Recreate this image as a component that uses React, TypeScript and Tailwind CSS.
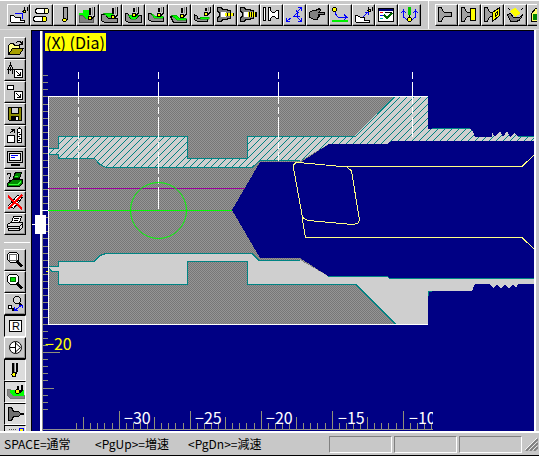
import type { ReactNode } from "react";

interface ToolItem {
  label: string;
  icon: ReactNode;
  pressed?: boolean;
}

const Icon = ({ children }: { children: ReactNode }) => (
  <svg
    width="21"
    height="20"
    viewBox="1 1 21 20"
    fill="none"
    stroke="#000"
    shapeRendering="crispEdges"
    className="block shrink-0"
    aria-hidden="true"
  >
    {children}
  </svg>
);

const ToolButton = ({ item, narrow }: { item: ToolItem; narrow?: boolean }) => (
  <button
    type="button"
    aria-label={item.label}
    aria-pressed={item.pressed}
    className={`flex h-[22px] shrink-0 overflow-hidden border ${
      narrow ? "w-[22px]" : "w-[23px]"
    } ${
      item.pressed
        ? "border-t-black border-l-black border-r-white border-b-white bg-[#dcdcdc]"
        : "border-t-white border-l-white border-r-black border-b-black bg-[#c8c8c8] shadow-[inset_-1px_-1px_0_#909090]"
    }`}
  >
    <Icon>{item.icon}</Icon>
  </button>
);

// turning tool pointing down, tip at (x, y)
const Tool = ({ x, y }: { x: number; y: number }) => (
  <g>
    <path
      d={`M${x} ${y - 3}V3.5M${x + 4.5} 3V${y - 2}L${x + 2} ${y}`}
      strokeWidth="1.5"
    />
    <path d={`M${x + 2.5} 3V${y - 3}`} stroke="#888" />
    <circle cx={x} cy={y} r="2" fill="#ff0" />
  </g>
);

const Funnel = ({ fill }: { fill: string }) => (
  <path
    d="M3.5 3.5H6.5L7.5 6.5L9.5 8.5H16.5V12.5H9.5L7.5 14.5L6.5 17.5H3.5Z"
    fill={fill}
  />
);

const Chuck = () => (
  <path
    d="M3.5 3.5H7.5L8.5 5.5H13.5V6.5H16.5V14.5H13.5V15.5H8.5L7.5 17.5H3.5V13.5L5.5 12.5V8.5L3.5 7.5Z"
    fill="#808080"
  />
);

const Cut = ({ stock, cut }: { stock: string; cut: string }) => (
  <g>
    <path d={stock} fill="#909090" />
    <path d={cut} fill="#0f0" stroke="#008000" strokeWidth="0.5" />
  </g>
);

const mainTools: ToolItem[] = [
  {
    label: "Profile",
    icon: (
      <>
        <path d="M3.5 18V11.5H6.5L8.5 13.5H13.5V16.5H17.5V18.5Z" fill="#fff" />
        <path d="M8 9.5H15.5V15" stroke="#00f" />
        <path d="M17.5 3V6M20.5 3V7" />
        <circle cx="17.5" cy="7.5" r="1.5" fill="#ff0" />
      </>
    ),
  },
  {
    label: "Stock",
    icon: (
      <>
        <path d="M7.5 4.5H17.5L18.5 5.5V8.5L17.5 9.5H7.5L5.5 8.5V5.5Z" fill="#fff" />
        <ellipse cx="16.5" cy="7" rx="2" ry="2.5" fill="#ffff9c" />
        <path d="M5.5 12.5H15.5L16.5 13.5V16.5L15.5 17.5H5.5L3.5 16.5V13.5Z" fill="#fff" />
        <ellipse cx="14.5" cy="15" rx="2" ry="2.5" fill="#ff0" />
      </>
    ),
  },
  {
    label: "Tool",
    icon: (
      <>
        <path d="M10.5 14V3.5H14.5V15L12.5 17.5" fill="#a0a0a0" />
        <circle cx="11.5" cy="16" r="1.8" fill="#ff0" />
      </>
    ),
  },
  {
    label: "Rough cut",
    icon: (
      <>
        <path d="M3.5 18V11.5H6.5L9.5 14.5H17.5V18Z" fill="#808080" stroke="#555" />
        <path d="M7 6H13V15H10L7 11H3V9H7Z" fill="#0f0" stroke="none" />
        <Tool x={14} y={14} />
      </>
    ),
  },
  {
    label: "Outer cut",
    icon: (
      <>
        <Cut stock="M2.5 10.5H6.5L9.5 14.5H18.5V18.5H5.5L2.5 16.5Z" cut="M4 9H14V13H9Z" />
        <Tool x={14} y={13} />
      </>
    ),
  },
  {
    label: "Groove",
    icon: (
      <>
        <Cut stock="M3.5 9.5H5.5L8.5 14.5H14.5L17.5 11.5H19.5V18.5H6.5L3.5 16.5Z" cut="M6 11H17L14 15H9Z" />
        <Tool x={12} y={11} />
      </>
    ),
  },
  {
    label: "Finish",
    icon: (
      <>
        <Cut stock="M3.5 9.5H5.5L9.5 13.5H18.5V17.5H6.5L3.5 15.5Z" cut="M6 9L10 12H18V14H9Z" />
        <Tool x={14} y={11} />
      </>
    ),
  },
  {
    label: "Thread",
    icon: (
      <>
        <Cut stock="M2.5 12.5H6.5L9.5 15.5H18.5V18.5H5.5Z" cut="M3 11H8L11 14H18V16H9Z" />
        <Tool x={14} y={12} />
      </>
    ),
  },
  {
    label: "Part off",
    icon: (
      <>
        <Cut stock="M3.5 10.5L6.5 12.5V14.5H16.5V17.5H6.5L3.5 15.5Z" cut="M9 13H18V15H9Z" />
        <Tool x={15} y={10} />
      </>
    ),
  },
  {
    label: "Drill",
    icon: (
      <>
        <Chuck />
        <path d="M7 8H12V13H7Z" fill="#fff" stroke="none" />
        <path d="M11 10.5H20" stroke="#000" strokeWidth="3" />
        <path d="M11 10.5H20" stroke="#ff0" strokeWidth="3" strokeDasharray="2 1" />
      </>
    ),
  },
  {
    label: "Tap",
    icon: (
      <>
        <Chuck />
        <path d="M7 8H12V13H7Z" fill="#fff" stroke="none" />
        <path d="M11 10.5H20" stroke="#000" strokeWidth="5" />
        <path d="M11 10.5H19" stroke="#ff0" strokeWidth="5" strokeDasharray="1 1" />
      </>
    ),
  },
  {
    label: "Bar feed",
    icon: (
      <>
        <path d="M3.5 3.5H5.5V16.5H3.5Z" fill="#fff" />
        <path d="M8.5 3.5H10.5V6.5L12.5 8.5H14.5L16.5 6.5H18.5V14.5H16.5L14.5 12.5H12.5L10.5 14.5V16.5H8.5Z" fill="#fff" />
      </>
    ),
  },
  {
    label: "Transfer",
    icon: (
      <>
        <path d="M4 17L8 14M11 12L14 9V13L18 17M10 12.5H17M14 8L18 4" stroke="#00f" />
        <path d="M3.5 14V17.5H7M15 3.5H18.5V7M18.5 14V17.5H15M13 6L14.5 8L16 9" stroke="#00f" />
      </>
    ),
  },
  {
    label: "Manual",
    icon: (
      <path
        d="M3.5 8.5L6.5 6.5H9.5L13.5 4.5L14.5 6.5L12.5 8.5H18.5V10.5H12.5L13.5 12.5L11.5 13.5V15.5H7.5L4.5 13.5H3.5Z"
        fill="#808080"
      />
    ),
  },
  {
    label: "Approach",
    icon: (
      <>
        <path d="M6.5 7V10L9.5 13.5H17M15 10.5L18 13.5L15 15.5" stroke="#00f" />
        <path d="M3 17H19" stroke="#0e0" strokeWidth="2" />
        <circle cx="5.5" cy="5.5" r="2" fill="#ff0" />
      </>
    ),
  },
  {
    label: "Rapid",
    icon: (
      <>
        <path d="M3.5 18V11.5H5.5L8.5 13.5H12.5V16.5H17.5V18.5Z" fill="#fff" />
        <path d="M11 13L16 8M13 8H16V11" stroke="#00f" />
        <path d="M16.5 3V5M20.5 3V7" />
        <circle cx="17.5" cy="6.5" r="1.5" fill="#ff0" />
      </>
    ),
  },
  {
    label: "Settings",
    icon: (
      <>
        <path d="M3.5 4.5H18.5V17.5H3.5Z" fill="#fff" />
        <path d="M4 5.5H18" stroke="#000080" strokeWidth="2" />
        <path d="M5 8.5H8" stroke="#f00" />
        <path d="M5 11.5H8" stroke="#00f" />
        <path d="M5 14.5H8" stroke="#0aa" />
        <path d="M9 11L12 14L17 9" stroke="#060" strokeWidth="2" />
        <path d="M10 8.5H17" />
      </>
    ),
  },
  {
    label: "Offset",
    icon: (
      <>
        <path d="M11.5 3V11" stroke="#0c0" strokeWidth="3" />
        <path d="M11.5 11V15" />
        <path d="M9 15.5L5.5 13V7M3.5 9L5.5 6L7.5 9M14 15.5L17.5 13V7M15.5 9L17.5 6L19.5 9" stroke="#00f" />
        <circle cx="11.5" cy="15.5" r="2" fill="#ff0" />
      </>
    ),
  },
];

const chuckTools: ToolItem[] = [
  { label: "Chuck", icon: <Funnel fill="#a0a0a0" /> },
  {
    label: "Clamp",
    icon: (
      <>
        <Funnel fill="#a0a0a0" />
        <path d="M12.5 4.5H17.5V16.5H12.5Z" fill="#ff0" />
      </>
    ),
  },
  {
    label: "Face",
    icon: (
      <>
        <Funnel fill="#a0a0a0" />
        <path d="M11.5 8.5L18.5 3.5V11.5L11.5 17.5Z" fill="#ff0" />
        <path d="M14.5 9.5L16 8V11L14.5 12Z" />
      </>
    ),
  },
  {
    label: "Turn",
    icon: (
      <>
        <path d="M3.5 10.5L6.5 9.5L9.5 13.5H15.5L18.5 10.5L16.5 15.5L12.5 17.5H6.5Z" fill="#808080" />
        <path d="M6 7L11 4L17 9L11 13Z" fill="#ff0" stroke="none" />
        <path d="M4 4L7 7M17 6L19 4" strokeDasharray="1 1" />
      </>
    ),
  },
  {
    label: "Area",
    icon: (
      <>
        <path d="M4.5 17.5V9.5L8.5 4.5H18V17.5Z" fill="#ff6" />
        <path d="M6 10H18V16H6Z" fill="#080" stroke="none" />
      </>
    ),
  },
];

const CornerArrow = () => (
  <>
    <path d="M10.5 10.5H18.5V18.5H10.5Z" fill="#fff" />
    <path d="M12 12L16 16M16.5 12.5V16.5H12.5" />
  </>
);

const fileTools: ToolItem[] = [
  {
    label: "Open",
    icon: (
      <>
        <path d="M4.5 17.5V8.5L6.5 6.5H9.5L10.5 8.5H15.5V11.5" fill="#ffff8c" />
        <path d="M4.5 17.5L8.5 11.5H19.5L15.5 17.5Z" fill="#a8a000" />
        <path d="M12 5.5L14 4.5H16L18 6.5M18.5 4V7.5H15" />
      </>
    ),
  },
  {
    label: "Load tool",
    icon: (
      <>
        <path d="M6.5 3V6L4.5 8.5V15M6.5 6L8.5 8.5V15M3 10.5H10M6.5 8V12" />
        <CornerArrow />
      </>
    ),
  },
  {
    label: "Load shape",
    icon: (
      <>
        <path d="M3.5 4.5H9.5V8.5H3.5Z" fill="#fff" />
        <CornerArrow />
      </>
    ),
  },
  {
    label: "Save",
    icon: (
      <>
        <path d="M4.5 4.5H17.5V17.5H5.5L4.5 16.5Z" fill="#8c8c00" />
        <path d="M7.5 4.5H14.5V10.5H7.5Z" fill="#d0d0d0" />
        <path d="M7.5 13.5H14.5V17.5H7.5Z" fill="#000" />
        <path d="M12.5 14V17" stroke="#fff" strokeWidth="2" />
      </>
    ),
  },
  {
    label: "Export",
    icon: (
      <>
        <path d="M3.5 10.5H10.5V17.5H3.5Z" fill="#fff" />
        <path d="M6 8L10 5M6.5 4.5H10.5V8" />
        <path d="M13.5 4.5L15.5 3L17.5 4.5V17.5H13.5Z" fill="#fff" />
        <path d="M14 7.5H16M15 9.5H17M14 11.5H16M15 13.5H17M14 15.5H16" />
      </>
    ),
  },
  {
    label: "Display",
    icon: (
      <>
        <path d="M3.5 4.5H18.5V15.5H3.5Z" fill="#d0d0d0" />
        <path d="M5.5 6.5H16.5V13.5H5.5Z" fill="#fff" />
        <path d="M7 8.5H14M7 10.5H11" stroke="#00f" />
        <path d="M7 17.5H16" strokeWidth="2" />
      </>
    ),
  },
  {
    label: "Machine help",
    icon: (
      <>
        <path d="M3.5 6V4.5H6.5V7.5L5.5 8.5V10M5.5 11V13" />
        <path d="M10.5 4.5L12.5 3.5H17.5L15.5 9.5H9.5Z" fill="#008000" />
        <path d="M11.5 6.5H15L14 8H11Z" fill="#3f3" stroke="none" />
        <path d="M3.5 14.5L8.5 10.5H18.5V14.5L15.5 17.5H3.5Z" fill="#080" />
        <path d="M5 15.5H14L17 12.5" stroke="#3f3" />
      </>
    ),
  },
  {
    label: "Clear tool",
    icon: (
      <>
        <path d="M4.5 14.5L13.5 4.5L18.5 6.5L9.5 17.5Z" fill="#fff" />
        <path d="M8 12L16 7M7 15L15 9" />
        <path d="M4 5L18 18M18 4L4 18" stroke="#f00" strokeWidth="2" />
      </>
    ),
  },
  {
    label: "Print",
    icon: (
      <>
        <path d="M7.5 9.5L9.5 3.5H17.5L15.5 9.5Z" fill="#fff" />
        <path d="M10 5.5H15M9.5 7.5H14" />
        <path d="M3.5 11.5L6.5 9.5H18.5V14.5L15.5 17.5H4.5Z" fill="#e0e0e0" />
        <path d="M4 13.5H15.5L18 11M5 15.5H15M15.5 13V17" />
      </>
    ),
  },
];

const viewTools: ToolItem[] = [
  {
    label: "Zoom",
    icon: (
      <>
        <path d="M5.5 3.5H12.5L14.5 5.5V10.5L12.5 13.5H6.5L3.5 10.5V5.5Z" fill="#fff" />
        <path d="M5.5 5.5H12.5V11.5H5.5Z" fill="#fff" stroke="#666" />
        <path d="M13 12L18 17.5" strokeWidth="3" />
      </>
    ),
  },
  {
    label: "Zoom area",
    icon: (
      <>
        <path d="M5.5 3.5H12.5L14.5 5.5V10.5L12.5 13.5H6.5L3.5 10.5V5.5Z" fill="#fff" />
        <path d="M6.5 6.5H11.5V10.5H6.5Z" fill="#0d0" stroke="#060" />
        <path d="M13 12L18 17.5" strokeWidth="3" />
      </>
    ),
  },
  {
    label: "Zoom scale",
    icon: (
      <>
        <circle cx="13" cy="7" r="3.5" fill="#d8d8d8" />
        <path d="M15 10L17.5 13" strokeWidth="2" />
        <circle cx="6" cy="14" r="2" fill="#fff" />
        <path d="M8 15L10 18" strokeWidth="2" />
        <path d="M10.5 17.5L18 12M10.5 14V17.5H14M15 12.5H18.5V15" stroke="#00f" />
      </>
    ),
  },
  {
    label: "Reset",
    pressed: true,
    icon: (
      <>
        <path d="M5.5 5.5H17.5V16.5H5.5Z" fill="#fff" />
        <text x="8" y="15" fontSize="11" fontFamily="Liberation Sans, sans-serif" fill="#000" stroke="none">
          R
        </text>
      </>
    ),
  },
  {
    label: "Forward",
    icon: (
      <g shapeRendering="auto">
        <circle cx="11.5" cy="10.5" r="6" fill="#fff" />
        <path d="M6 10.5H12M11.5 5V16M12 6.5L16.5 10.5L12 14.5" />
      </g>
    ),
  },
  {
    label: "Show tool",
    pressed: true,
    icon: (
      <>
        <path d="M8.5 4V14M12.5 4V13L10.5 16" strokeWidth="2" />
        <path d="M10.5 4V14" stroke="#888" />
        <circle cx="10" cy="15.5" r="2" fill="#ff0" />
      </>
    ),
  },
  {
    label: "Show stock",
    pressed: true,
    icon: (
      <>
        <path d="M3.5 8.5H6.5L8.5 14.5H20V17.5H6.5L3.5 14.5Z" fill="#888" stroke="#777" />
        <path d="M6 9H20V15H9L6 12Z" fill="#0f0" stroke="none" />
        <path d="M14 5V9M18 4V9L15 12" strokeWidth="2" />
        <circle cx="13.5" cy="10.5" r="2" fill="#ff0" />
      </>
    ),
  },
  {
    label: "Show chuck",
    pressed: true,
    icon: (
      <path
        d="M4.5 4.5H7.5L9.5 8.5H14.5L16.5 10.5H19.5V11.5H16.5L14.5 13.5H9.5L7.5 17.5H4.5Z"
        fill="#707070"
      />
    ),
  },
  {
    label: "Show path",
    pressed: true,
    icon: (
      <>
        <path d="M5 4.5H12" stroke="#555" strokeDasharray="1 1" />
        <path d="M15.5 3.5H19.5V6.5H15.5Z" fill="#ff0" stroke="#00f" />
      </>
    ),
  },
];

const UNIT = 7.1;
const yTicks = Array.from({ length: 48 }, (_, i) => i - 19);
const xTicks = Array.from({ length: 51 }, (_, i) => i);
const xLabels = [
  { value: "−30", x: 124 },
  { value: "−25", x: 195 },
  { value: "−20", x: 266 },
  { value: "−15", x: 338 },
  { value: "−10", x: 409 },
];

const upperProfile =
  "M49 148H58V136H187V158H247V136H355L394 96H428V129H470L473 131L475 137H492V132L495 137L500 131L503 137L507 131L510 137L515 133L518 137H534V141H392L387 144H329L300 161H260L252 167H106L100 165L94 158H58V154H49Z";
const lowerProfile =
  "M49 266H58V261H94L100 255L106 253H252L259 260H300L328 276H387L390 278H534V284H518L516 288L513 285L509 288L505 285L501 288L497 285L493 288L490 284H475L472 291H428V325H395L356 284H247V261H187V284H58V271H52L49 268Z";

const MachiningPlot = () => (
  <svg
    viewBox="32 31 502 400"
    className="block h-full w-full"
    shapeRendering="crispEdges"
    fontFamily='"Noto Sans CJK JP", sans-serif'
    role="img"
    aria-label="Lathe machining view"
  >
    <defs>
      <pattern id="hatch" width="7" height="7" patternUnits="userSpaceOnUse">
        <path d="M-1 8L8 -1M-1 1L1 -1M6 8L8 6" stroke="#008080" />
      </pattern>
      <pattern id="stock" width="2" height="2" patternUnits="userSpaceOnUse">
        <path d="M0 0H2V2H0Z" fill="#959595" />
        <path d="M0 0H1V1H0ZM1 1H2V2H1Z" fill="#777" />
      </pattern>
      <clipPath id="ruler">
        <rect x="43" y="400" width="390" height="31" />
      </clipPath>
    </defs>

    {/* stock */}
    <rect x="48" y="96" width="370" height="229" fill="url(#stock)" />
    <path d="M232 210L260 162H301L329 144H387L392 141H428V278H390L387 276H328L300 258H260Z" fill="#000084" />

    {/* finished part */}
    <path d={upperProfile} fill="#cfcfcf" />
    <path d={upperProfile} fill="url(#hatch)" />
    <path d={lowerProfile} fill="#cfcfcf" />
    <g fill="none" stroke="#008484">
      <path d="M49 148.5H58.5V136.5H187.5V158.5H247.5V136.5H355.5L395 96.5" />
      <path d="M49 154.5H58.5V158.5H94.5L100 164.5L106 167.5H252L260 160.5H300" />
      <path d="M432 128.5H470M518 136.5H534" />
      <path d="M49 266.5H58.5V261.5H94L100 255.5L106 253.5H252L259 260.5H300M328 276.5H387L390 278.5H534" />
      <path d="M49 268L52 271.5H58.5V284.5H187.5V261.5H247.5V284.5H356L395.5 324M428.5 296V291.5H432" />
    </g>
    <path d="M428 96.5H48.5V324.5H428" fill="none" stroke="#fff" />

    {/* centre line and reference marks */}
    <path d="M48 188.5H245" stroke="#990099" />
    <path d="M48 210.5H232" stroke="#0f0" />
    <g stroke="#fff" strokeDasharray="7 3 22 3">
      <path d="M78.5 72V210" />
      <path d="M158.5 72V210" />
      <path d="M278.5 72V161" />
      <path d="M412.5 72V137" />
    </g>
    <circle cx="158.5" cy="210.5" r="28" fill="none" stroke="#0f0" shapeRendering="auto" />

    {/* boring bar with insert */}
    <g fill="none" stroke="#ffff84">
      <path d="M298.5 162.5L347 167L351.5 171L359.5 220L358 223L353 224.5L308 220.5L302.5 217.5L293.5 168V165L296 162.5Z" />
      <path d="M347 166.5H522L534 155M302 217L305.5 237.5H522L534 249" />
    </g>

    {/* vertical ruler */}
    <path d="M42.5 31V431" stroke="#909090" />
    <path d="M41 31V431" stroke="#fff" strokeWidth="2" />
    {yTicks.map((k) => {
      const y = Math.round(210 + k * UNIT) + 0.5;
      const end = k === 20 ? 60 : k === 25 ? 54 : 48;
      return <path key={k} d={`M43 ${y}H${end}`} stroke="#909078" />;
    })}
    <path d="M46 271.5H48" stroke="#ff0" />
    <path d="M32 224.5H36M40 210.5H48" stroke="#fff" />
    <rect x="35" y="215" width="11" height="19" fill="#fff" />
    <text x="45" y="350" fontSize="16" fontWeight="400" fill="#ff0">
      −20
    </text>

    {/* horizontal ruler */}
    <path d="M43 429.5H433" stroke="#909090" />
    {xTicks.map((k) => {
      const x = Math.round(76 + k * UNIT) + 0.5;
      const top = k % 10 === 6 ? 411 : k % 10 === 1 ? 417 : 423;
      return <path key={k} d={`M${x} ${top}V430`} stroke="#909078" />;
    })}
    <g clipPath="url(#ruler)" fontSize="16" fontWeight="400" fill="#fff">
      {xLabels.map((label) => (
        <text key={label.value} x={label.x} y="424">
          {label.value}
        </text>
      ))}
    </g>
  </svg>
);

const StatusBar = () => (
  <footer className="flex h-[23px] shrink-0 items-center border-b border-black pr-px text-xs text-black">
    <span className="w-[91px] pl-1 whitespace-nowrap">SPACE=通常</span>
    <span className="w-[93px] pl-1 whitespace-nowrap">&lt;PgUp&gt;=増速</span>
    <span className="flex-1 pl-1 whitespace-nowrap">&lt;PgDn&gt;=減速</span>
    <div className="flex gap-0.5">
      {[0, 1, 2].map((i) => (
        <div
          key={i}
          className="h-[17px] w-[63px] border border-t-[#808080] border-r-white border-b-white border-l-[#808080]"
        />
      ))}
    </div>
    <svg width="14" height="14" viewBox="0 0 14 14" className="ml-0.5 shrink-0" aria-hidden="true">
      <path d="M1 13L13 1M5 13L13 5M9 13L13 9" stroke="#fff" />
      <path d="M2 14L14 2M6 14L14 6M10 14L14 10" stroke="#808080" strokeWidth="2" />
    </svg>
  </footer>
);

const App = () => {
  return (
    <div className="flex h-screen flex-col overflow-hidden bg-[#c8c8c8] font-['Noto_Sans_CJK_JP',sans-serif]">
      <header className="flex h-[30px] shrink-0 overflow-hidden border-t border-b border-t-white border-b-[#dedede] pr-0.5">
        <div className="flex shrink-0 pt-[3px] pl-[7px]">
          {mainTools.map((item) => (
            <ToolButton key={item.label} item={item} />
          ))}
        </div>
        <div className="ml-[7px] flex min-w-0 flex-1 overflow-hidden border-l border-white pt-[3px] pl-1.5">
          {chuckTools.map((item) => (
            <ToolButton key={item.label} item={item} />
          ))}
        </div>
      </header>

      <main className="flex min-h-0 flex-1 border-b-2 border-white">
        <aside className="flex w-[31px] shrink-0 flex-col overflow-hidden pl-1">
          <div className="flex flex-col pt-[7px]">
            {fileTools.map((item) => (
              <ToolButton key={item.label} item={item} narrow />
            ))}
          </div>
          <hr className="mt-[7px] mr-px mb-1.5 shrink-0 border-white" />
          <div className="flex flex-col">
            {viewTools.map((item) => (
              <ToolButton key={item.label} item={item} narrow />
            ))}
          </div>
        </aside>
        <section className="relative min-w-0 flex-1 border-t border-l border-black bg-[#000084]">
          <MachiningPlot />
          <div className="absolute top-0.5 left-[13px] bg-[#ff0] px-px text-base leading-[18px] whitespace-nowrap text-black">
            (X) (Dia)
          </div>
        </section>
        <div className="w-[5px] shrink-0 border-l-2 border-white" />
      </main>

      <StatusBar />
    </div>
  );
};

export default App;
